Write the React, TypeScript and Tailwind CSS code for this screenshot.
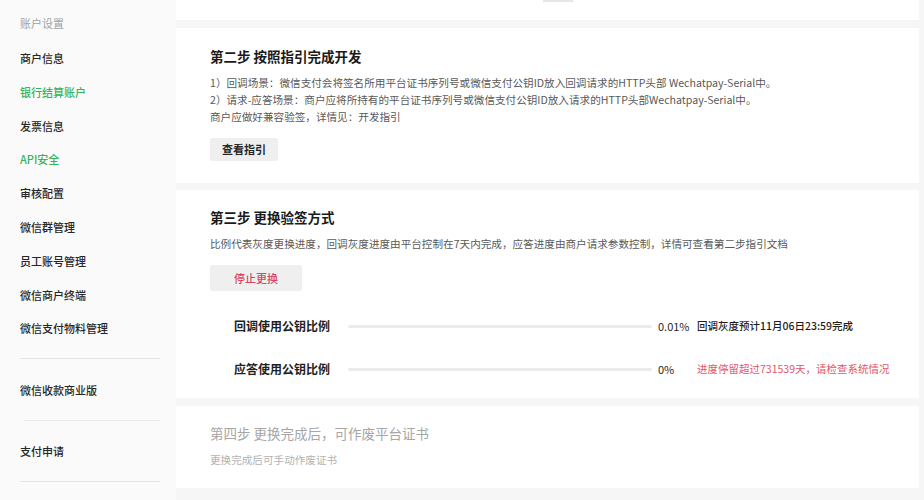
import React from 'react';

const font = { fontFamily: '"Noto Sans CJK SC", "Noto Sans", sans-serif' };

const navItems: { label: string; active?: boolean }[] = [
  { label: '商户信息' },
  { label: '银行结算账户', active: true },
  { label: '发票信息' },
  { label: 'API安全', active: true },
  { label: '审核配置' },
  { label: '微信群管理' },
  { label: '员工账号管理' },
  { label: '微信商户终端' },
  { label: '微信支付物料管理' },
];

const Sidebar: React.FC = () => (
  <aside className="w-[176px] shrink-0 bg-[#fafafa] pl-[20px] pr-[16px]">
    <div className="pt-[16px] text-[11px] leading-[14px] text-[#a3a3a3]">账户设置</div>
    <ul className="mt-[21px] flex flex-col">
      {navItems.map((item) => (
        <li
          key={item.label}
          className={`h-[33.8px] text-[11px] leading-[14px] font-medium ${
            item.active ? 'text-[#36b45a]' : 'text-[#262626]'
          }`}
        >
          {item.label}
        </li>
      ))}
    </ul>
    <div className="mt-[3px] h-px bg-[#e6e6e6]" />
    <div className="pt-[24px] pb-[23px] text-[11px] leading-[14px] font-medium text-[#262626]">
      微信收款商业版
    </div>
    <div className="ml-[4px] h-px bg-[#ececec]" />
    <div className="pt-[23px] pb-[23px] text-[11px] leading-[14px] font-medium text-[#262626]">
      支付申请
    </div>
    <div className="h-px bg-[#e6e6e6]" />
  </aside>
);

type ProgressRowProps = {
  label: string;
  percent: number;
  percentText: string;
  note: string;
  warn?: boolean;
};

const ProgressRow: React.FC<ProgressRowProps> = ({ label, percent, percentText, note, warn }) => (
  <div className="flex h-[20px] items-center whitespace-nowrap pl-[24px]">
    <div className="w-[114px] shrink-0 text-[12px] font-semibold text-[#1f1f1f]">{label}</div>
    <div className="h-[3px] w-[304px] shrink-0 rounded-full bg-[#ececec]">
      <div className="h-full rounded-full bg-[#36b45a]" style={{ width: `${percent}%` }} />
    </div>
    <div className="ml-[6px] w-[39px] shrink-0 text-[11px] text-[#262626]">{percentText}</div>
    <div className={`shrink-0 text-[10.5px] ${warn ? 'text-[#e2566b]' : 'font-medium text-[#1f1f1f]'}`}>{note}</div>
  </div>
);

export default function App() {
  return (
    <div className="flex h-[500px] w-[924px] overflow-hidden bg-[#f6f6f6]" style={font}>
      <Sidebar />
      <main className="flex min-w-0 flex-1 flex-col gap-[8px] pr-[5px]">
        <section className="relative h-[20px] bg-white">
          <div className="absolute left-[367px] top-0 h-[2px] w-[30px] bg-[#e6e6e6]" />
        </section>

        <section className="h-[155px] bg-white px-[34px] pt-[18px]">
          <h2 className="text-[13.5px] leading-[20px] font-semibold text-[#1a1a1a]">第二步 按照指引完成开发</h2>
          <div className="mt-[8px] text-[10.6px] leading-[17px] text-[#595959]">
            <p>1）回调场景：微信支付会将签名所用平台证书序列号或微信支付公钥ID放入回调请求的HTTP头部 Wechatpay-Serial中。</p>
            <p>2）请求-应答场景：商户应将所持有的平台证书序列号或微信支付公钥ID放入请求的HTTP头部Wechatpay-Serial中。</p>
            <p>商户应做好兼容验签，详情见：开发指引</p>
          </div>
          <button
            type="button"
            className="mt-[13px] h-[23px] w-[68px] rounded-[2px] bg-[#efefef] text-[11px] font-semibold text-[#262626]"
          >
            查看指引
          </button>
        </section>

        <section className="-mt-px h-[208px] bg-white px-[34px] pt-[17px]">
          <h2 className="text-[13.5px] leading-[20px] font-semibold text-[#1a1a1a]">第三步 更换验签方式</h2>
          <p className="mt-[8px] text-[10.6px] leading-[17px] text-[#595959]">
            比例代表灰度更换进度，回调灰度进度由平台控制在7天内完成，应答进度由商户请求参数控制，详情可查看第二步指引文档
          </p>
          <button
            type="button"
            className="mt-[13px] h-[26px] w-[92px] rounded-[2px] bg-[#efefef] text-[11px] font-medium text-[#d9455f]"
          >
            停止更换
          </button>
          <div className="mt-[25px] flex flex-col gap-[23px]">
            <ProgressRow label="回调使用公钥比例" percent={0.01} percentText="0.01%" note="回调灰度预计11月06日23:59完成" />
            <ProgressRow label="应答使用公钥比例" percent={0} percentText="0%" note="进度停留超过731539天，请检查系统情况" warn />
          </div>
        </section>

        <section className="h-[82px] bg-white px-[34px] pt-[17px]">
          <h2 className="text-[13.5px] leading-[20px] text-[#a6a6a6]">第四步 更换完成后，可作废平台证书</h2>
          <p className="mt-[8px] text-[10.6px] leading-[17px] text-[#b3b3b3]">更换完成后可手动作废证书</p>
        </section>
      </main>
    </div>
  );
}
